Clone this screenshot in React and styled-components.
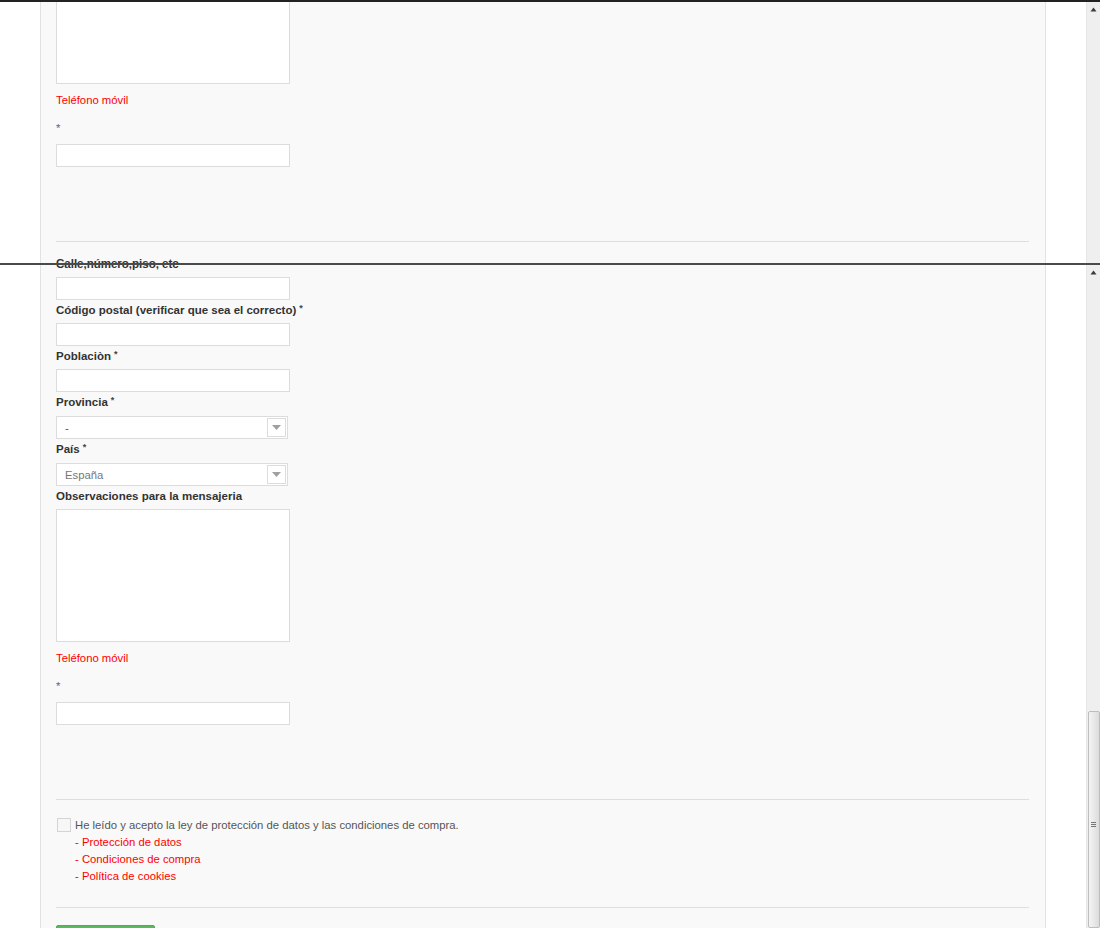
import React from 'react'
import styled, { createGlobalStyle } from 'styled-components'

const GlobalStyle = createGlobalStyle`
	html, body {
		margin: 0;
		padding: 0;
		background: #fff;
	}
	body {
		font-family: "Liberation Sans", Arial, sans-serif;
		font-size: 11.3px;
		color: #333;
		overflow: hidden;
	}
`

// one browser capture: a clipped viewport with its own scrollbar
const Capture = styled.div`
	display: flex;
	height: ${props => props.height}px;
	box-sizing: border-box;
	overflow: hidden;
	border-top: 2px solid ${props => props.edge};
	background: #fff;
`

const Gutter = styled.div`
	flex: none;
	width: ${props => props.width}px;
	background: #fff;
`

const Sheet = styled.div`
	flex: none;
	width: 1006px;
	box-sizing: border-box;
	padding: 0 16px 0 15px;
	background: #f9f9f9;
	border-left: 1px solid #e2e2e2;
	border-right: 1px solid #e2e2e2;
`

const Scrolled = styled.div`
	margin-top: ${props => props.offset}px;
`

const Scrollbar = styled.div`
	flex: none;
	width: 14px;
	display: flex;
	flex-direction: column;
	align-items: center;
	background: #efefef;
	border-left: 1px solid #e6e6e6;
	box-sizing: border-box;
`

const ArrowButton = styled.div`
	height: 15px;
	width: 100%;
	display: flex;
	align-items: center;
	justify-content: center;
	> svg {
		width: 7px;
		height: 5px;
	}
`

const Thumb = styled.div`
	margin-top: auto;
	width: 12px;
	height: ${props => props.size}px;
	box-sizing: border-box;
	border: 1px solid #bdbdbd;
	border-radius: 2px;
	background: linear-gradient(to right, #f4f4f4, #dcdcdc);
	display: flex;
	justify-content: center;
	padding-top: ${props => props.grip}px;
	> svg {
		width: 5px;
		height: 6px;
	}
`

const Label = styled.div`
	font-weight: bold;
	font-size: 11.5px;
	line-height: 16px;
	padding: 2px 0 5px;
	color: #333;
	white-space: nowrap;
`

const Hint = styled.span`
	font-weight: normal;
	font-size: 10px;
	color: #888;
	margin-left: 18px;
	vertical-align: -4px;
`

const Req = styled.span`
	font-size: 9px;
	vertical-align: top;
	line-height: 12px;
	margin-left: 3px;
	color: #444;
`

const Input = styled.input`
	display: block;
	width: 234px;
	height: 23px;
	box-sizing: border-box;
	margin: 0;
	border: 1px solid #dcdcdc;
	background: #fff;
	font: inherit;
`

const TextArea = styled.textarea`
	display: block;
	width: 234px;
	height: 133px;
	box-sizing: border-box;
	margin: 0;
	margin-top: ${props => props.offset || 0}px;
	border: 1px solid #dcdcdc;
	background: #fff;
	resize: none;
	font: inherit;
`

const Select = styled.div`
	display: flex;
	align-items: center;
	width: 232px;
	height: 23px;
	margin-top: 1px;
	box-sizing: border-box;
	border: 1px solid #dcdcdc;
	background: #fff;
	padding-left: 8px;
	color: ${props => (props.muted ? '#777' : '#555')};

	.value {
		flex: 1;
	}
	.arrow {
		width: 19px;
		height: 19px;
		margin-right: 1px;
		box-sizing: border-box;
		border: 1px solid #dcdcdc;
		display: flex;
		align-items: center;
		justify-content: center;
		> svg {
			width: 9px;
			height: 5px;
		}
	}
`

const RedNote = styled.div`
	color: #f00;
	line-height: 16px;
	margin-top: 8px;
`

const Star = styled.div`
	color: #666;
	line-height: 16px;
	margin: 12px 0 8px;
`

const Rule = styled.hr`
	border: 0;
	border-top: 1px solid #dedede;
	margin: ${props => props.top}px 0 0;
	height: 0;
`

const Consent = styled.div`
	display: flex;
	align-items: flex-start;
	gap: 4px;
	margin-top: 17px;
	line-height: 17px;
	color: #555;
`

const Box = styled.span`
	flex: none;
	width: 14px;
	height: 14px;
	box-sizing: border-box;
	margin: 1px 0 0 1px;
	border: 1px solid #d4d4d4;
	background: #f7f7f7;
`

const Links = styled.div`
	display: flex;
	flex-direction: column;
	padding-left: 19px;
	line-height: 17px;
	a {
		color: #f00;
		text-decoration: none;
	}
`

const SubmitButton = styled.button`
	display: block;
	margin-top: 17px;
	width: 99px;
	height: 30px;
	border: 1px solid #4cae4c;
	border-radius: 2px;
	background: #5cb85c;
	color: #fff;
	font: inherit;
	font-weight: bold;
`

const UpArrow = () => (
	<ArrowButton>
		<svg viewBox="0 0 7 5">
			<path d="M3.5 0.5 L6.5 4.5 L0.5 4.5 Z" fill="#3c3c3c" />
		</svg>
	</ArrowButton>
)

const Grip = () => (
	<svg viewBox="0 0 5 6">
		<path d="M0 0.5h5M0 2.5h5M0 4.5h5" stroke="#777" strokeWidth="1" />
	</svg>
)

const Caret = () => (
	<svg viewBox="0 0 9 5">
		<path d="M0 0 L9 0 L4.5 5 Z" fill="#a0a0a0" />
	</svg>
)

const Field = ({ label, required, children }) => (
	<>
		<Label>
			{label}
			{required && <Req>*</Req>}
		</Label>
		{children}
	</>
)

const Dropdown = ({ value, muted }) => (
	<Select muted={muted}>
		<span className="value">{value}</span>
		<span className="arrow">
			<Caret />
		</span>
	</Select>
)

const Mobile = () => (
	<>
		<RedNote>Teléfono móvil</RedNote>
		<Star>*</Star>
		<Input />
	</>
)

const StreetLabel = ({ withHint }) => (
	<Label>
		Calle,número,piso, etc
		{withHint && <Hint>indique la dirección completa donde desea recibir el pedido</Hint>}
	</Label>
)

const App = () => (
	<>
		<GlobalStyle />

		<Capture height={263} edge="#222">
			<Gutter width={40} />
			<Sheet>
				<TextArea offset={-51} />
				<Mobile />
				<Rule top={74} />
				<Scrolled offset={11}>
					<StreetLabel withHint />
				</Scrolled>
			</Sheet>
			<Gutter width={40} />
			<Scrollbar>
				<UpArrow />
			</Scrollbar>
		</Capture>

		<Capture height={665} edge="#4a4a4a">
			<Gutter width={40} />
			<Sheet>
				<Scrolled offset={-11}>
					<StreetLabel />
					<Input />
					<Field label="Código postal (verificar que sea el correcto)" required>
						<Input />
					</Field>
					<Field label="Poblaciòn" required>
						<Input />
					</Field>
					<Field label="Provincia" required>
						<Dropdown value="-" />
					</Field>
					<Field label="País" required>
						<Dropdown value="España" muted />
					</Field>
					<Field label="Observaciones para la mensajeria">
						<TextArea />
					</Field>
					<Mobile />
					<Rule top={74} />

					<Consent>
						<Box />
						<span>He leído y acepto la ley de protección de datos y las condiciones de compra.</span>
					</Consent>
					<Links>
						<a href="#proteccion">- Protección de datos</a>
						<a href="#condiciones">- Condiciones de compra</a>
						<a href="#cookies">- Política de cookies</a>
					</Links>
					<Rule top={22} />
					<SubmitButton type="button">Comprar</SubmitButton>
				</Scrolled>
			</Sheet>
			<Gutter width={40} />
			<Scrollbar>
				<UpArrow />
				<Thumb size={217} grip={110}>
					<Grip />
				</Thumb>
			</Scrollbar>
		</Capture>
	</>
)

export default App
